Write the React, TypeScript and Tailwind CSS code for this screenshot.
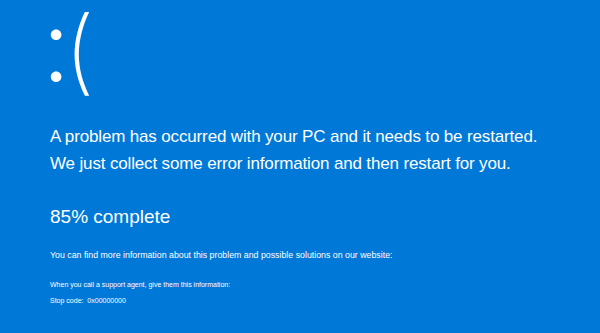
const App = () => {
    return (
        <div className="w-[600px] h-[333px] bg-[#0078d7] text-white overflow-hidden" style={{fontFamily: '"Liberation Sans", Arial, sans-serif'}}>
            <div className="h-[110px] pl-[42px] flex items-start" style={{fontFamily: 'Inter, sans-serif'}}>
                <span className="text-[100px] leading-[90px] font-light tracking-[-6px]">:</span>
                <span className="text-[92px] leading-[100px] font-extralight">(</span>
            </div>
            <div className="pl-[50px]">
                <div className="text-[17px] leading-[27px] tracking-[-0.15px] mt-[13px]">
                    <div>A problem has occurred with your PC and it needs to be restarted.</div>
                    <div>We just collect some error information and then restart for you.</div>
                </div>
                <div className="text-[19px] leading-[24px] mt-[28px]">85% complete</div>
                <div className="text-[8.8px] mt-[20px]">You can find more information about this problem and possible solutions on our website:</div>
                <div className="text-[7px] mt-[18px]">When you call a support agent, give them this information:</div>
                <div className="text-[7px] mt-[5px]">Stop code:&nbsp; 0x00000000</div>
            </div>
        </div>
    );
}
export default App;
